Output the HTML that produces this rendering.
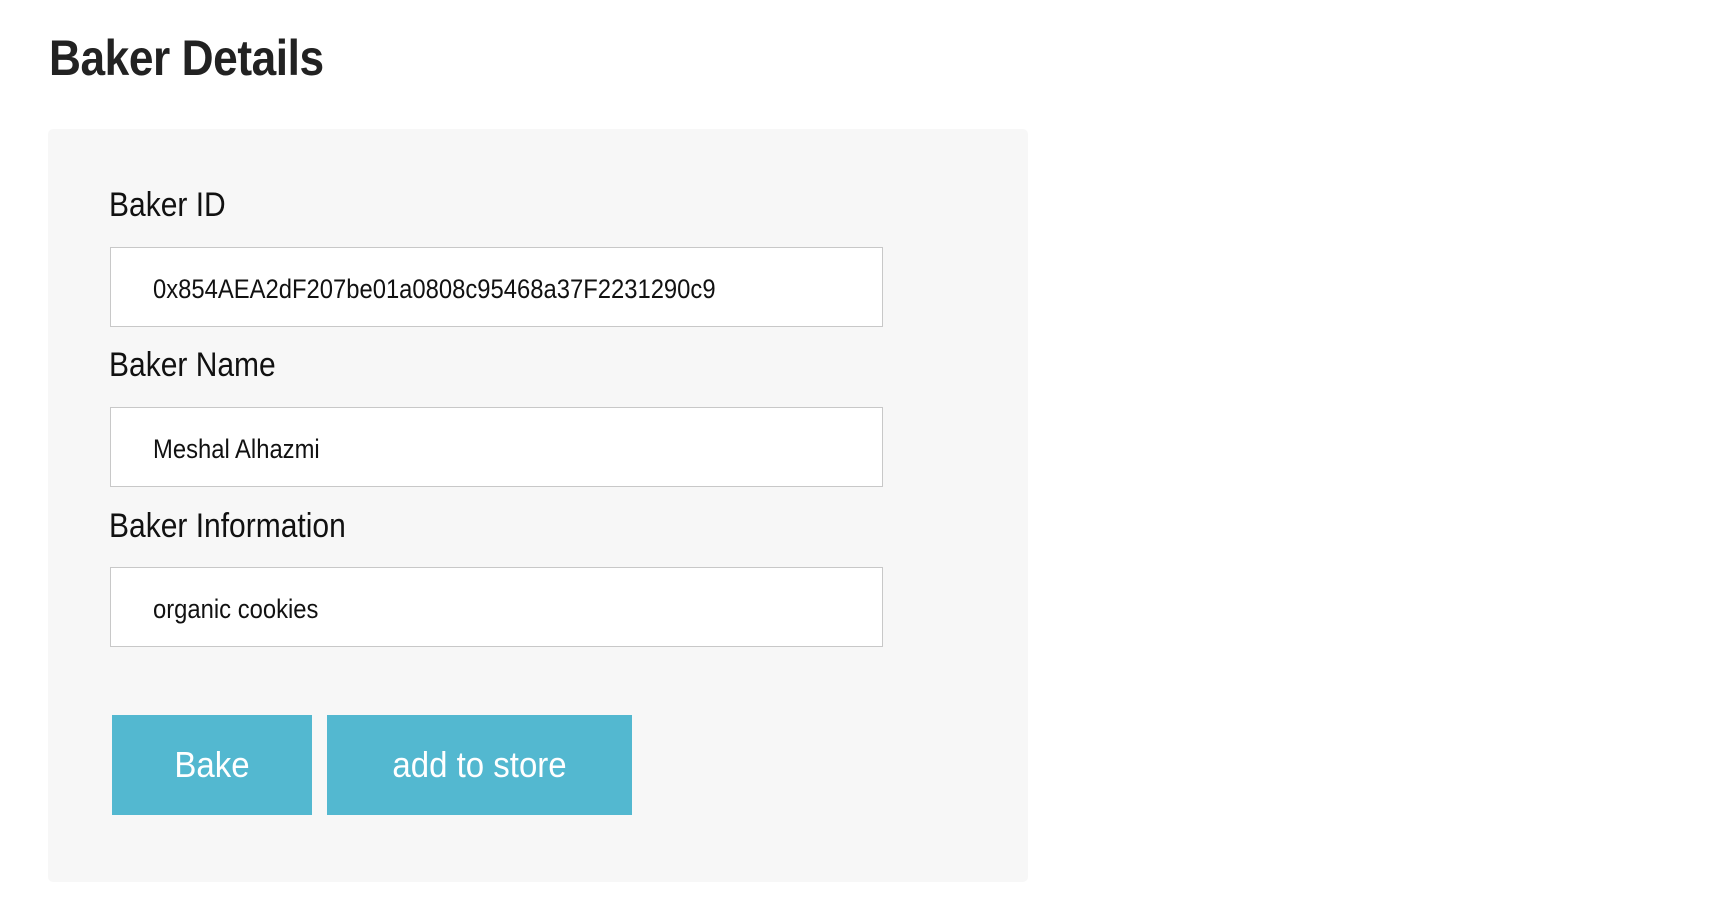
<!DOCTYPE html>
<html><head><style>
*{margin:0;padding:0;box-sizing:border-box}
body{width:1710px;height:920px;background:#fff;font-family:"Liberation Sans",sans-serif;color:#222;position:relative;overflow:hidden}
.a{position:absolute;white-space:nowrap;transform-origin:0 100%}
h1{position:absolute;left:49px;top:30px;font-size:50px;font-weight:bold;line-height:56px;transform:scaleX(0.885);transform-origin:0 0;color:#222;letter-spacing:-0.5px}
.box{position:absolute;left:48px;top:129px;width:980px;height:753px;background:#f7f7f7;border-radius:5px}
.lab{font-size:30px;line-height:30px;transform:scaleY(1.15);color:#111}
.inp{position:absolute;left:110px;width:773px;height:80px;background:#fff;border:1px solid #c8c8c8}
.inp span{position:absolute;left:42px;top:27px;font-size:23px;line-height:24px;transform:scaleX(1.035) scaleY(1.15);transform-origin:0 0;color:#111}
.btn{position:absolute;top:715px;height:100px;background:#53b8d0;color:#fff;font-size:33px;text-align:center;line-height:100px}
.btn span{display:inline-block;transform:scaleY(1.1)}
</style></head><body>
<h1>Baker Details</h1>
<div class="box"></div>
<div class="a lab" style="left:109px;top:193px">Baker ID</div>
<div class="inp" style="top:247px"><span>0x854AEA2dF207be01a0808c95468a37F2231290c9</span></div>
<div class="a lab" style="left:109px;top:353px">Baker Name</div>
<div class="inp" style="top:407px"><span>Meshal Alhazmi</span></div>
<div class="a lab" style="left:109px;top:514px">Baker Information</div>
<div class="inp" style="top:567px"><span>organic cookies</span></div>
<div class="btn" style="left:112px;width:200px"><span>Bake</span></div>
<div class="btn" style="left:327px;width:305px"><span>add to store</span></div>
</body></html>
